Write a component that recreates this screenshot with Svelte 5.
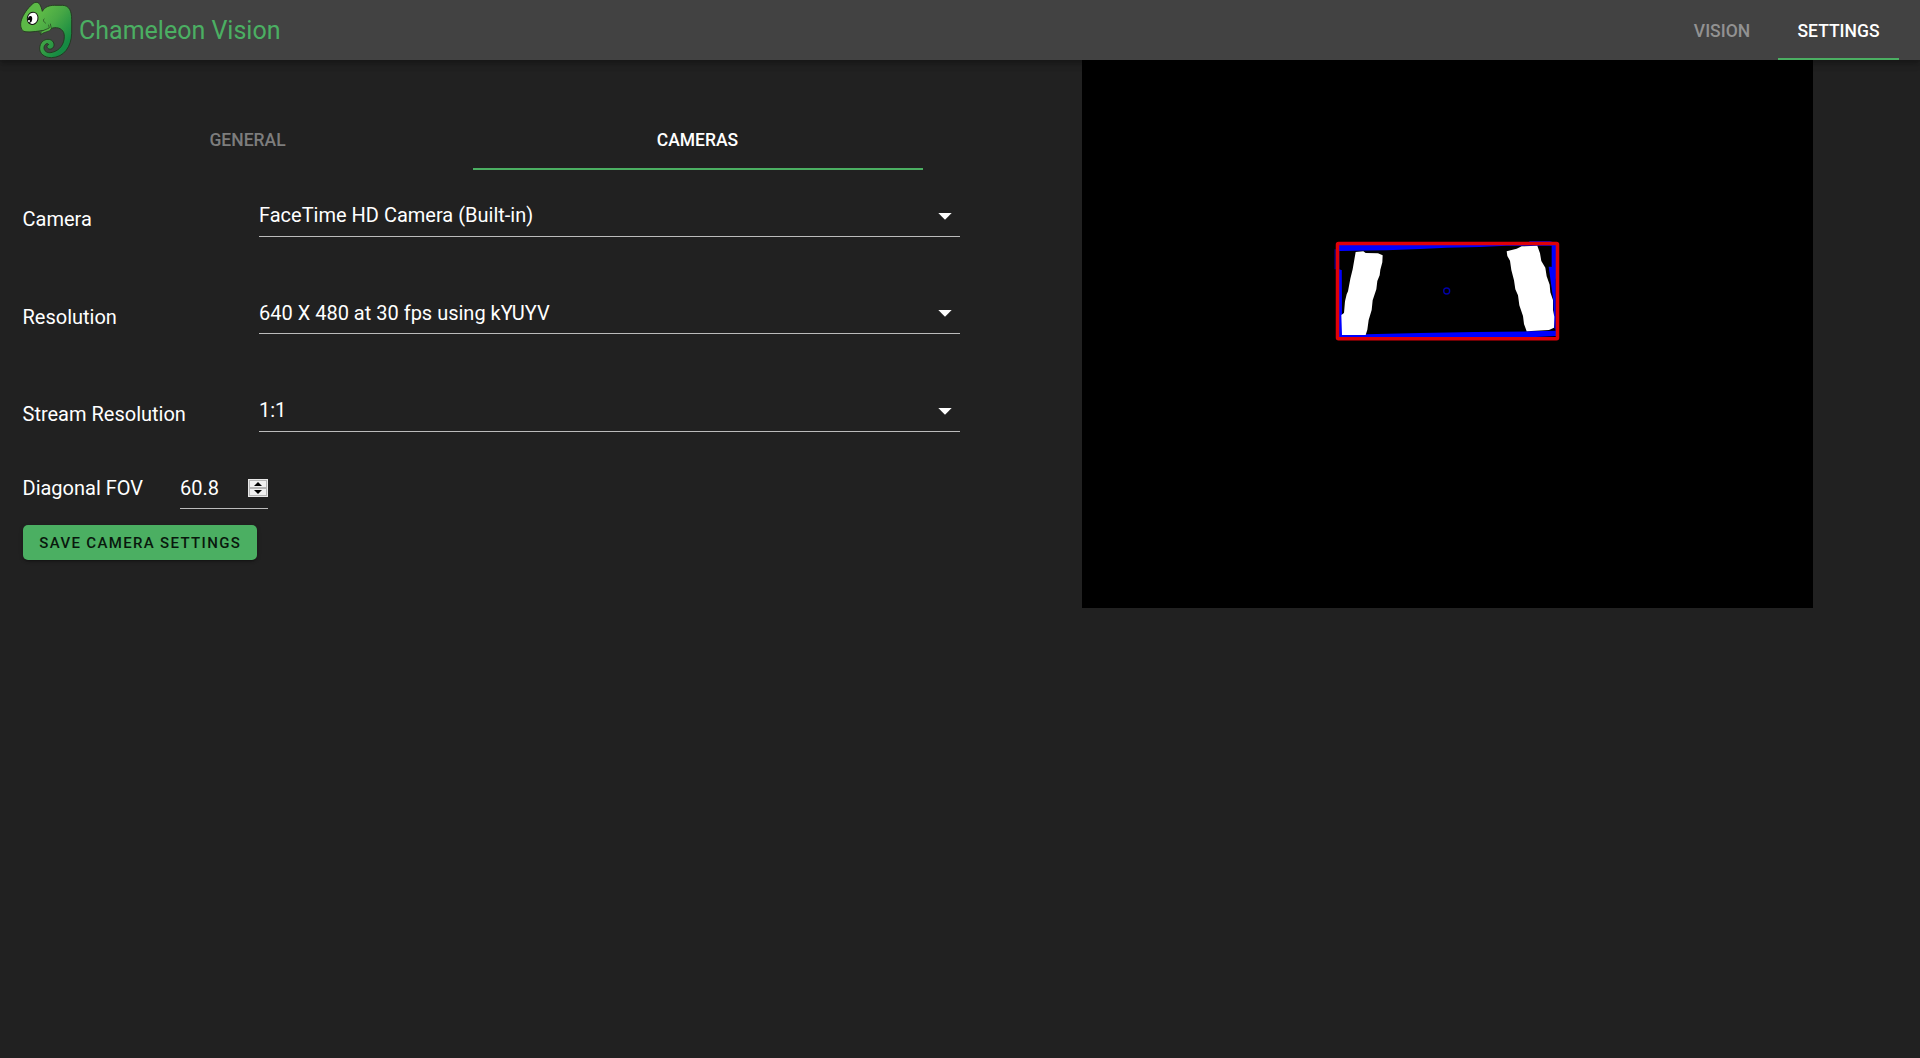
<script>
  const views = ['Vision', 'Settings'];
  const sections = ['General', 'Cameras'];
  const selects = [
    { label: 'Camera', value: 'FaceTime HD Camera (Built-in)' },
    { label: 'Resolution', value: '640 X 480 at 30 fps using kYUYV' },
    { label: 'Stream Resolution', value: '1:1' }
  ];
  let view = $state('Settings');
  let section = $state('Cameras');
  let fov = $state(60.8);
  const step = (d) => (fov = Math.round((fov + d) * 10) / 10);
</script>

<div class="app">
  <header>
    <svg class="logo" viewBox="0 0 210 192" aria-hidden="true">
      <defs>
        <linearGradient id="skin" gradientUnits="userSpaceOnUse" x1="90" y1="45" x2="180" y2="115">
          <stop offset="0" stop-color="#5cb947" />
          <stop offset="0.4" stop-color="#48a845" />
          <stop offset="1" stop-color="#158a43" />
        </linearGradient>
      </defs>
      <path
        d="M78 7 C88 6 93 18 97 34 C105 20 118 16 134 16 L157 16 C178 16 185 34 185 58 L185 100 C184 139 163 172 124 173 C103 173 88 160 89 144 C90 128 101 118 114 118 C125 118 133 126 132 136 C131 145 122 150 115 146 C109 142 110 135 116 134 C113 126 101 134 102 145 C104 157 116 160 127 157 C150 151 163 132 163 109 C163 91 150 82 134 83 C126 83 121 88 116 90 C90 92 63 98 45 95 C34 93 30 78 33 65 C36 50 48 31 62 17 C68 11 73 7 78 7 Z"
        fill="url(#skin)" stroke="#20331d" stroke-width="2.6" />
      <path d="M116 74 L118 84 L94 94 C86 93 84 97 89 98 L94 98 L92 105 L99 99 L119 92 L124 86 L121 71"
        fill="#55b546" stroke="#20331d" stroke-width="2" stroke-linejoin="round" />
      <path d="M103 56 C98 61 101 65 107 70" fill="none" stroke="#20331d" stroke-width="2" />
      <ellipse cx="68" cy="55" rx="16" ry="18.5" transform="rotate(15 68 55)" fill="#fff" stroke="#111" stroke-width="3" />
      <ellipse cx="60" cy="58" rx="6.5" ry="10" transform="rotate(8 60 58)" fill="#050505" />
      <circle cx="57" cy="63" r="3" fill="#fff" />
    </svg>
    <h1>Chameleon Vision</h1>
    <nav>
      {#each views as name}
        <button class="tab" class:active={view === name} onclick={() => (view = name)}>{name}</button>
      {/each}
    </nav>
  </header>

  <main>
    <section class="settings">
      <div class="sections">
        {#each sections as name}
          <button class="tab" class:active={section === name} onclick={() => (section = name)}>{name}</button>
        {/each}
      </div>
      {#each selects as row}
        <div class="row">
          <span class="label">{row.label}</span>
          <div class="select">
            <span>{row.value}</span>
            <svg viewBox="0 0 14 7" aria-hidden="true"><path d="M0.3 0H13.7L7 6.8Z" fill="#fff" /></svg>
          </div>
        </div>
      {/each}
      <div class="fov">
        <span>Diagonal FOV</span>
        <div class="number">
          <span>{fov}</span>
          <div class="spinner">
            <button aria-label="Increase" onclick={() => step(0.1)}>
              <svg viewBox="0 0 8 4"><path d="M0 4H8L4 0Z" /></svg>
            </button>
            <button aria-label="Decrease" onclick={() => step(-0.1)}>
              <svg viewBox="0 0 8 4"><path d="M0 0H8L4 4Z" /></svg>
            </button>
          </div>
        </div>
      </div>
      <button class="save">Save Camera Settings</button>
    </section>

    <svg class="stream" viewBox="1082 60 731 548" role="img" aria-label="Camera stream">
      <g transform="translate(1320 230) scale(0.33333)">
        <path d="M50 42 L628 38 L628 34 L690 34 L712 40 L712 318 L630 322 L52 326Z" fill="#0000fe" />
        <path d="M62 63 L200 61 L300 57 L380 53 L480 51 L560 47 L695 47 L695 108 L707 150 L707 302 L630 304 L465 306 L300 309 L140 313 L68 314 L66 250 L64 120 L58 118 L58 63Z" fill="#000" />
        <path d="M45.5 58V118" stroke="#0000a0" stroke-width="4" />
        <path d="M61 120V320" stroke="#0000fe" stroke-width="8" />
        <path d="M107 66 L130 64 L137 69 L174 70 L188 76 L187 97 L181 119 L179 136 L172 153 L169 178 L158 211 L155 240 L146 270 L142 299 L137 315 L66 315 L64 255 L72 249 L75 214 L80 193 L84 184 L91 146 L98 118Z" fill="#fff" />
        <path d="M686 110 L707 110 L707 300 L703 294 L700 210Z" fill="#0000fe" />
        <path d="M560 64 L590 56 L605 49 L652 47 L660 70 L664 93 L676 113 L680 139 L689 164 L691 187 L699 210 L699 240 L703 260 L702 293 L687 300 L620 304 L612 282 L609 258 L598 226 L594 196 L586 178 L582 151 L574 120 L570 92 L562 78Z" fill="#fff" />
        <circle cx="380" cy="183" r="9" fill="none" stroke="#0000a8" stroke-width="4" />
        <rect x="52.5" y="40.5" width="660" height="286" rx="3" fill="none" stroke="#df0008" stroke-width="10.5" />
      </g>
    </svg>
  </main>
</div>

<style>
  :global(body) {
    background: #212121;
  }
  .app {
    min-height: 1058px;
    box-sizing: border-box;
    background: #212121;
    color: #fff;
    font: 400 20px/30px Roboto, sans-serif;
  }
  button {
    border: 0;
    margin: 0;
    padding: 0;
    background: none;
    color: inherit;
    font: inherit;
  }
  header {
    position: relative;
    display: flex;
    align-items: center;
    height: 60px;
    padding: 0 21px 0 10px;
    box-sizing: border-box;
    background: #424242;
    box-shadow: 0 2px 5px -1px rgba(0, 0, 0, 0.2), 0 5px 6px rgba(0, 0, 0, 0.14), 0 1px 12px rgba(0, 0, 0, 0.12);
  }
  .logo {
    width: 70px;
    height: 64px;
    margin-bottom: -4px;
    flex: none;
  }
  h1 {
    margin: 2px 0 0 -1px;
    color: #4baf62;
    font-size: 25px;
    font-weight: 400;
    line-height: 30px;
  }
  nav {
    display: flex;
    margin-left: auto;
  }
  .tab {
    height: 60px;
    padding: 2px 20px 0;
    box-sizing: border-box;
    border-bottom: 2px solid transparent;
    color: #929292;
    font-size: 17.5px;
    font-weight: 500;
    text-transform: uppercase;
  }
  nav .tab {
    min-width: 112px;
    padding: 4px 19.5px 0;
  }
  .sections .tab {
    flex: 1;
    color: #7d7d7d;
  }
  .tab.active,
  .sections .tab.active {
    border-color: #4baf62;
    color: #fff;
  }
  main {
    display: flex;
    align-items: flex-start;
  }
  .settings {
    width: 937.5px;
    padding: 50px 0 0 22.5px;
  }
  .sections {
    display: flex;
    width: 900px;
    margin-bottom: 26.5px;
  }
  .row {
    display: flex;
    height: 97.5px;
  }
  .label {
    width: 236.5px;
    padding-top: 7.9px;
  }
  .select {
    display: flex;
    flex: 1;
    justify-content: space-between;
    height: 35.6px;
    padding: 3.9px 8px 0 0;
    border-bottom: 1px solid #bcbcbc;
  }
  .select svg {
    width: 14px;
    height: 7px;
    margin-top: 12.5px;
  }
  .fov {
    display: flex;
    height: 52px;
    margin-top: -16px;
  }
  .fov > span {
    width: 157.5px;
  }
  .number {
    display: flex;
    justify-content: space-between;
    width: 88px;
    height: 36px;
    box-sizing: border-box;
    border-bottom: 1px solid #bcbcbc;
  }
  .spinner {
    display: flex;
    flex-direction: column;
    gap: 2px;
    width: 20px;
    height: 18px;
    margin-top: 6px;
    padding: 1px;
    box-sizing: border-box;
    background: #b5b5b5;
    border: 1px solid #e8e8e8;
  }
  .spinner button {
    display: flex;
    flex: 1;
    align-items: center;
    justify-content: center;
    background: #f0f0f0;
  }
  .spinner svg {
    width: 8px;
    height: 4px;
  }
  .save {
    display: block;
    height: 35px;
    padding: 0 15.5px 0 16.3px;
    margin-left: 0.5px;
    border-radius: 5px;
    background: #4baf62;
    color: #09180d;
    font-size: 15px;
    font-weight: 500;
    letter-spacing: 0.0892857em;
    text-transform: uppercase;
    box-shadow: 0 3px 1px -2px rgba(0, 0, 0, 0.2), 0 2px 2px rgba(0, 0, 0, 0.14), 0 1px 5px rgba(0, 0, 0, 0.12);
  }
  .stream {
    width: 731px;
    height: 548px;
    margin-left: 122px;
    background: #000;
  }
</style>
